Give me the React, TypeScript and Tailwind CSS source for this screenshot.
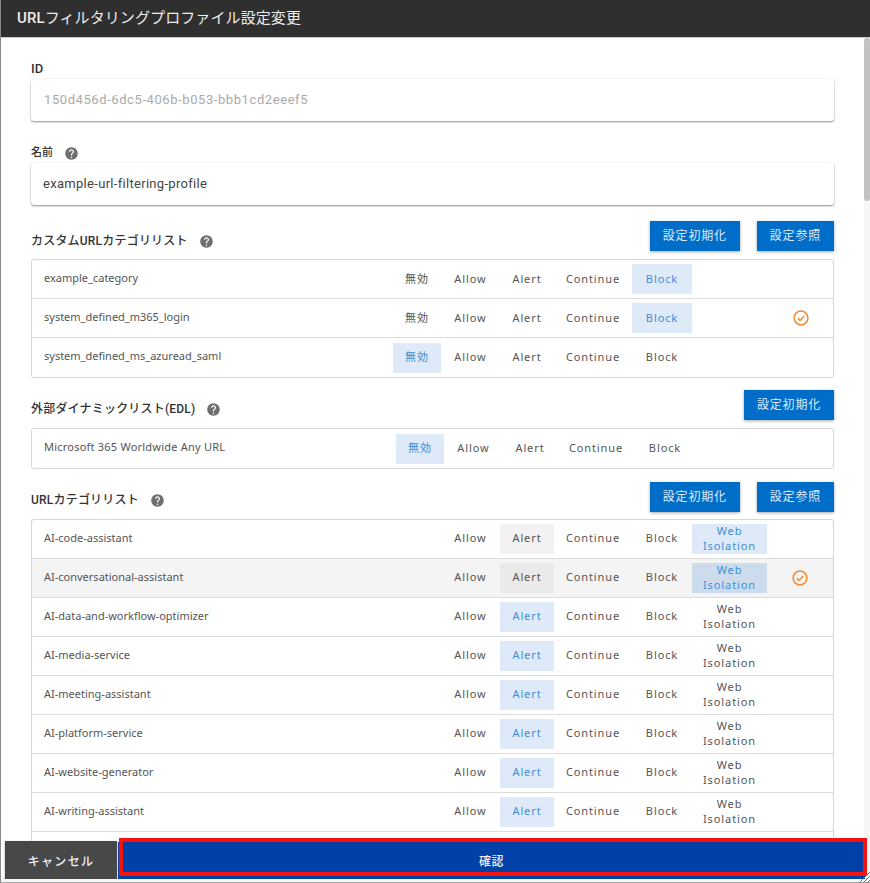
import React from 'react';

type Row = {
  name: string;
  options: string[];
  selected: string;
  check?: boolean;
  hover?: boolean;
};

const customOptions = ['無効', 'Allow', 'Alert', 'Continue', 'Block'];
const urlOptions = ['Allow', 'Alert', 'Continue', 'Block', 'Web Isolation'];

const customRows: Row[] = [
  { name: 'example_category', options: customOptions, selected: 'Block' },
  { name: 'system_defined_m365_login', options: customOptions, selected: 'Block', check: true },
  { name: 'system_defined_ms_azuread_saml', options: customOptions, selected: '無効' },
];

const edlRows: Row[] = [{ name: 'Microsoft 365 Worldwide Any URL', options: customOptions, selected: '無効' }];

const urlRows: Row[] = [
  { name: 'AI-code-assistant', options: urlOptions, selected: 'Web Isolation' },
  { name: 'AI-conversational-assistant', options: urlOptions, selected: 'Web Isolation', check: true, hover: true },
  { name: 'AI-data-and-workflow-optimizer', options: urlOptions, selected: 'Alert' },
  { name: 'AI-media-service', options: urlOptions, selected: 'Alert' },
  { name: 'AI-meeting-assistant', options: urlOptions, selected: 'Alert' },
  { name: 'AI-platform-service', options: urlOptions, selected: 'Alert' },
  { name: 'AI-website-generator', options: urlOptions, selected: 'Alert' },
  { name: 'AI-writing-assistant', options: urlOptions, selected: 'Alert' },
  // mostly hidden behind the footer
  { name: '', options: [], selected: '' },
];

const cellWidths: Record<string, string> = {
  無効: 'w-[48px]',
  Allow: 'w-[59px]',
  Alert: 'w-[54px]',
  Continue: 'w-[78px]',
  Block: 'w-[60px]',
  'Web Isolation': 'w-[75px]',
};

const HelpIcon = () => (
  <svg viewBox="0 0 24 24" className="w-[15px] h-[15px] fill-[#6f6f6f]">
    <path d="M12 2C6.48 2 2 6.48 2 12s4.48 10 10 10 10-4.48 10-10S17.52 2 12 2zm1 17h-2v-2h2v2zm2.07-7.75l-.9.92C13.45 12.9 13 13.5 13 15h-2v-.5c0-1.1.45-2.1 1.17-2.83l1.24-1.26c.37-.36.59-.86.59-1.41 0-1.1-.9-2-2-2s-2 .9-2 2H8c0-2.21 1.79-4 4-4s4 1.79 4 4c0 .88-.36 1.68-.93 2.25z" />
  </svg>
);

const CheckIcon = () => (
  <svg viewBox="0 0 16 16" className="w-[16px] h-[16px] fill-none stroke-[#f58a33]">
    <circle cx="8" cy="8" r="6.9" strokeWidth="1.5" />
    <path d="M4.9 8.2l2.2 2.2 4.1-4.4" strokeWidth="1.5" />
  </svg>
);

const BlueButton = ({ label }: { label: string }) => (
  <button className="h-[30px] px-[13px] bg-[#006dc9] text-[#dcebf8] text-[12px] tracking-[0.8px] shadow-[0_1px_3px_rgba(0,0,0,0.35)]">
    {label}
  </button>
);

const SectionHeader = ({
  title,
  buttons,
  className,
  titleOffset,
}: {
  title: string;
  buttons: string[];
  className: string;
  titleOffset: string;
}) => (
  <div className={'flex items-center justify-between ' + className}>
    <div className={'flex items-center gap-[11px] text-[12px] tracking-[0.2px] font-medium text-[#333] ' + titleOffset}>
      <span>{title}</span>
      <HelpIcon />
    </div>
    <div className="flex gap-[17px]">
      {buttons.map((b) => (
        <BlueButton key={b} label={b} />
      ))}
    </div>
  </div>
);

const optionStyle = (row: Row, option: string) => {
  if (row.selected === option) {
    return (row.hover ? 'bg-[#ccdcec]' : 'bg-[#deeaf7]') + ' text-[#3f8fd8]';
  }
  // first two rows keep the previous value greyed out
  if (option === 'Alert' && row.selected === 'Web Isolation') {
    return (row.hover ? 'bg-[#eaeaea]' : 'bg-[#f3f1f1]') + ' text-[#555]';
  }
  return 'text-[#555]';
};

const Table = ({ rows, nameClass, checkMargin }: { rows: Row[]; nameClass: string; checkMargin: string }) => (
  <div className="border border-[#d6d6d6] rounded-[3px]">
    {rows.map((row, i) => (
      <div
        key={row.name}
        className={
          'h-[39px] flex items-center ' +
          (i < rows.length - 1 ? 'border-b border-[#dcdcdc] ' : '') +
          (row.hover ? 'bg-[#f4f4f4]' : '')
        }
      >
        <div className={"pl-[12px] pb-[2px] text-[11px] text-[#555] shrink-0 font-['Noto_Sans','Noto_Sans_CJK_JP',sans-serif] " + nameClass}>
          {row.name}
        </div>
        {row.options.map((o) => (
          <span
            key={o}
            className={
              "h-[30px] flex items-center justify-center text-center shrink-0 text-[11px] leading-[15px] tracking-[0.9px] font-['Noto_Sans','Noto_Sans_CJK_JP',sans-serif] " +
              (row.options === urlOptions && o !== 'Web Isolation' ? 'pb-[4px] ' : 'pb-[2px] ') +
              cellWidths[o] +
              ' ' +
              optionStyle(row, o)
            }
          >
            {o}
          </span>
        ))}
        {row.check && (
          <div className={'ml-auto ' + checkMargin}>
            <CheckIcon />
          </div>
        )}
      </div>
    ))}
  </div>
);

export default function App() {
  return (
    <div className="relative h-[883px] w-[870px] overflow-hidden bg-white border-l border-[#8a8a8a] font-['Roboto','Noto_Sans_CJK_JP',sans-serif]">
      <div className="-ml-px h-[37px] bg-[#2f2f2f] flex items-center pl-[17px] text-[15px] tracking-[0.1px] text-[#ececec] border-b border-[#c9c9c9] box-content">
        <span className="font-medium">URL</span>
        <span>フィルタリングプロファイル設定変更</span>
      </div>

      <div className="pl-[30px] pr-[36px] pt-[21px]">
        <label className="block h-[20px] text-[13px] font-medium text-[#333]">ID</label>
        <div className="h-[42px] mb-[22px] flex items-center pl-[13px] rounded-[3px] bg-white shadow-[0_1px_2px_rgba(0,0,0,0.45),0_0_2px_rgba(0,0,0,0.06)] text-[13px] tracking-[0.58px] text-[#aaa]">
          150d456d-6dc5-406b-b053-bbb1cd2eeef5
        </div>

        <div className="h-[20px] flex items-center gap-[11px] text-[11px] font-medium text-[#333]">
          <span>名前</span>
          <HelpIcon />
        </div>
        <div className="h-[42px] mb-[16px] flex items-center pl-[12px] rounded-[3px] bg-white shadow-[0_1px_2px_rgba(0,0,0,0.45),0_0_2px_rgba(0,0,0,0.06)] text-[13px] tracking-[0.3px] text-[#444]">
          example-url-filtering-profile
        </div>

        <SectionHeader title="カスタムURLカテゴリリスト" buttons={['設定初期化', '設定参照']} className="mb-[8px]" titleOffset="pt-[10px]" />
        <Table rows={customRows} nameClass="w-[361px]" checkMargin="mr-[24px]" />

        <div className="h-[12px]" />
        <SectionHeader title="外部ダイナミックリスト(EDL)" buttons={['設定初期化']} className="mb-[8px]" titleOffset="pt-[8px]" />
        <Table rows={edlRows} nameClass="w-[364px] tracking-[0.22px]" checkMargin="mr-[24px]" />

        <div className="h-[13px]" />
        <SectionHeader title="URLカテゴリリスト" buttons={['設定初期化', '設定参照']} className="mb-[7px]" titleOffset="pt-[6px]" />
        <Table rows={urlRows} nameClass="w-[409px]" checkMargin="mr-[25px]" />
      </div>

      {/* scrollbar */}
      <div className="absolute right-0 top-[38px] bottom-0 w-[6px] bg-[#f6f6f6]">
        <div className="w-[6px] h-[163px] rounded-[3px] bg-[#c2c2c2]" />
      </div>

      {/* footer */}
      <div className="absolute left-0 right-0 bottom-0 h-[42px] bg-transparent pl-[4px] pr-[5px] pb-[4px] flex items-end">
        <button className="w-[112px] h-[38px] pt-[3px] bg-[#484848] text-[#eee] text-[12px] font-medium tracking-[1.3px] shadow-[0_1px_2px_rgba(0,0,0,0.4)]">
          キャンセル
        </button>
        <button className="ml-px flex-1 h-[37px] pt-[3px] bg-[#0041a8] text-[#eee] text-[12px] font-medium tracking-[0.5px]">
          確認
        </button>
      </div>

      {/* red highlight drawn around the confirm button */}
      <div className="absolute left-[118px] top-[838px] w-[748px] h-[38px] border-[4px] border-[#f5120f] shadow-[inset_0_0_1px_rgba(120,0,120,0.8)]" />

      <div className="absolute left-0 right-0 bottom-0 h-[4px] bg-[#f7f7f7] border-b border-[#a8a8a8]" />
      <svg viewBox="0 0 12 12" className="absolute right-0 bottom-0 w-[12px] h-[12px] stroke-[#777] fill-none">
        <path d="M1 12L12 1M5 12l7-7M9 12l3-3" />
      </svg>
    </div>
  );
}
